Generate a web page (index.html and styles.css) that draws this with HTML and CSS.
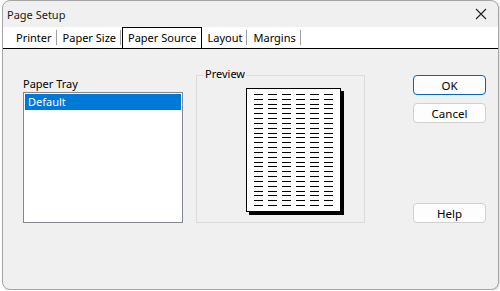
FILE: index.html
```html
<!DOCTYPE html>
<html lang="en">
<head>
<meta charset="UTF-8">
<title>Page Setup</title>
<link rel="stylesheet" href="styles.css">
</head>
<body>

<div class="window">
    <div class="titlebar">
        <span class="title">Page Setup</span>
        <svg class="close" width="12" height="12" viewBox="0 0 12 12">
            <path d="M1 1L11 11M11 1L1 11" stroke="#222" stroke-width="1.1" fill="none"/>
        </svg>
    </div>

    <div class="tabs">
        <div class="tab first">Printer</div>
        <div class="tab">Paper Size</div>
        <div class="tab active">Paper Source</div>
        <div class="tab">Layout</div>
        <div class="tab">Margins</div>
    </div>

    <div class="content">
        <div class="tray">
            <div class="label">Paper Tray</div>
            <div class="listbox">
                <div class="item selected">Default</div>
            </div>
        </div>

        <div class="group">
            <span class="group-label">Preview</span>
            <svg class="page" width="98" height="127" viewBox="0 0 98 127">
                <rect x="3" y="3" width="95" height="124" fill="#000"/>
                <rect x="0.5" y="0.5" width="94" height="123" fill="#fff" stroke="#000"/>
                <path d="M8 6.5H87M8 11.5H87M8 16.5H87M8 20.5H87M8 25.5H87M8 30.5H87M8 35.5H87M8 40.5H87M8 45.5H87M8 49.5H87M8 54.5H87M8 59.5H87M8 64.5H87M8 69.5H87M8 74.5H87M8 78.5H87M8 83.5H87M8 88.5H87M8 93.5H87M8 98.5H87M8 103.5H87M8 107.5H87M8 112.5H87M8 117.5H87"
                      stroke="#000" stroke-width="1" stroke-dasharray="9 5" fill="none"/>
            </svg>
        </div>

        <div class="buttons">
            <button class="btn default">OK</button>
            <button class="btn">Cancel</button>
            <button class="btn help">Help</button>
        </div>
    </div>
</div>

</body>
</html>
```

FILE: styles.css
```css
body {
    margin: 0;
    background-color: #fff;
    font-family: "Noto Sans", "Open Sans", sans-serif;
    font-size: 11px;
    color: #000;
}
.window {
    box-sizing: border-box;
    width: 497px;
    height: 290px;
    margin-left: 2px;
    border: 1px solid #a6a6a6;
    border-radius: 8px;
    background-color: #f0f0f0;
    overflow: hidden;
    box-shadow: 1px 1px 2px rgba(0, 0, 0, 0.15);
}
.titlebar {
    height: 26px;
    display: flex;
    align-items: center;
    justify-content: space-between;
    padding: 0 11px 0 4px;
}
.title {
    color: #1a1a1a;
}
.close {
    display: block;
}
.tabs {
    height: 21px;
    display: flex;
    background-color: #fff;
    border-bottom: 1px solid #000;
}
.tab {
    align-self: center;
    height: 15px;
    line-height: 15px;
    padding: 0 4px 0 6px;
    border-right: 1px solid #a0a0a0;
}
.tab.first {
    margin-left: 7px;
}
.tab.active {
    align-self: stretch;
    height: auto;
    line-height: 20px;
    margin-left: 1px;
    padding: 0 4px 0 5px;
    border: 1px solid #000;
    border-bottom: none;
}
.content {
    display: flex;
    padding: 26px 0 0 20px;
}
.tray {
    width: 160px;
    margin-top: 1px;
}
.label {
    height: 16px;
    line-height: 16px;
}
.listbox {
    box-sizing: border-box;
    height: 131px;
    border: 1px solid #828790;
    background-color: #fff;
    padding: 1px;
}
.item {
    height: 16px;
    line-height: 16px;
    padding-left: 3px;
}
.item.selected {
    background-color: #0078d7;
    color: #fff;
}
.group {
    position: relative;
    box-sizing: border-box;
    width: 169px;
    height: 148px;
    margin-left: 13px;
    border: 1px solid #dcdcdc;
    padding: 12px 0 0 49px;
}
.group-label {
    position: absolute;
    top: -10px;
    left: 7px;
    padding: 0 1px;
    background-color: #f0f0f0;
    line-height: 16px;
}
.page {
    display: block;
}
.buttons {
    display: flex;
    flex-direction: column;
    margin-left: 48px;
}
.btn {
    box-sizing: border-box;
    width: 73px;
    height: 20px;
    margin-bottom: 8px;
    padding: 0;
    font-family: inherit;
    font-size: 11.5px;
    color: #000;
    background-color: #fdfdfd;
    border: 1px solid #d0d0d0;
    border-radius: 4px;
}
.btn.default {
    border-color: #0067c0;
}
.btn.help {
    margin-top: 72px;
}
```
